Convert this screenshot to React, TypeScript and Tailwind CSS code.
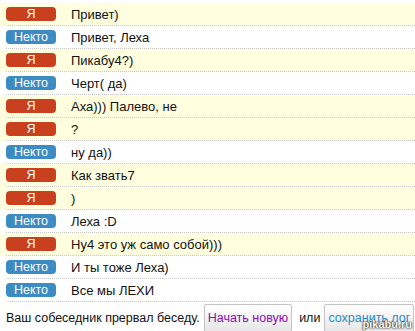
import React from "react";

const msgs: [boolean, string][] = [
  [true, "Привет)"],
  [false, "Привет, Леха"],
  [true, "Пикабу4?)"],
  [false, "Черт( да)"],
  [true, "Аха))) Палево, не"],
  [true, "?"],
  [false, "ну да))"],
  [true, "Как звать7"],
  [true, ")"],
  [false, "Леха :D"],
  [true, "Ну4 это уж само собой)))"],
  [false, "И ты тоже Леха)"],
  [false, "Все мы ЛЕХИ"],
];

export default function App() {
  return (
    <div
      className="relative w-[415px] h-[331px] overflow-hidden bg-white text-[#111] text-[13px]"
      style={{ fontFamily: "'Liberation Sans', Arial, sans-serif" }}
    >
      <div className="pt-[3px]">
        {msgs.map(([me, text], i) => (
          <div key={i} className={me ? "bg-[#ffffe0]" : "bg-white"}>
            <div className="ml-[6px] h-[23px] flex items-center border-b border-dotted border-[#c8c8c8]">
              <div
                className={
                  "w-[50px] h-[14px] shrink-0 rounded-[4px] flex items-center justify-center text-white text-[12.5px] leading-none " +
                  (me ? "bg-[#c9401f]" : "bg-[#3c8bc3]")
                }
              >
                {me ? "Я" : "Некто"}
              </div>
              <div className="ml-[15px] leading-none whitespace-nowrap">{text}</div>
            </div>
          </div>
        ))}
      </div>
      <div className="flex items-center pl-[6px] mt-[2px] h-[29px] whitespace-nowrap text-[12.5px]">
        <span className="shrink-0">Ваш собеседник прервал беседу.</span>
        <button className="ml-[4px] shrink-0 h-[29px] px-[3px] border border-[#c4c4c4] rounded-[2px] bg-gradient-to-b from-[#ffffff] to-[#e6e6e6] text-[#8a10b0] text-[12.5px] whitespace-nowrap">
          Начать новую
        </button>
        <span className="ml-[7px] shrink-0">или</span>
        <button className="ml-[4px] shrink-0 h-[29px] px-[3px] border border-[#c4c4c4] rounded-[2px] bg-gradient-to-b from-[#ffffff] to-[#e6e6e6] text-[#2a8ac8] text-[12.5px] whitespace-nowrap">
          сохранить лог
        </button>
      </div>
      <div
        className="absolute right-[3px] bottom-[1px] text-white text-[11px] font-bold leading-none"
        style={{ textShadow: "0 0 2px #000, 0 0 1px #000" }}
      >
        pikabu.ru
      </div>
    </div>
  );
}
